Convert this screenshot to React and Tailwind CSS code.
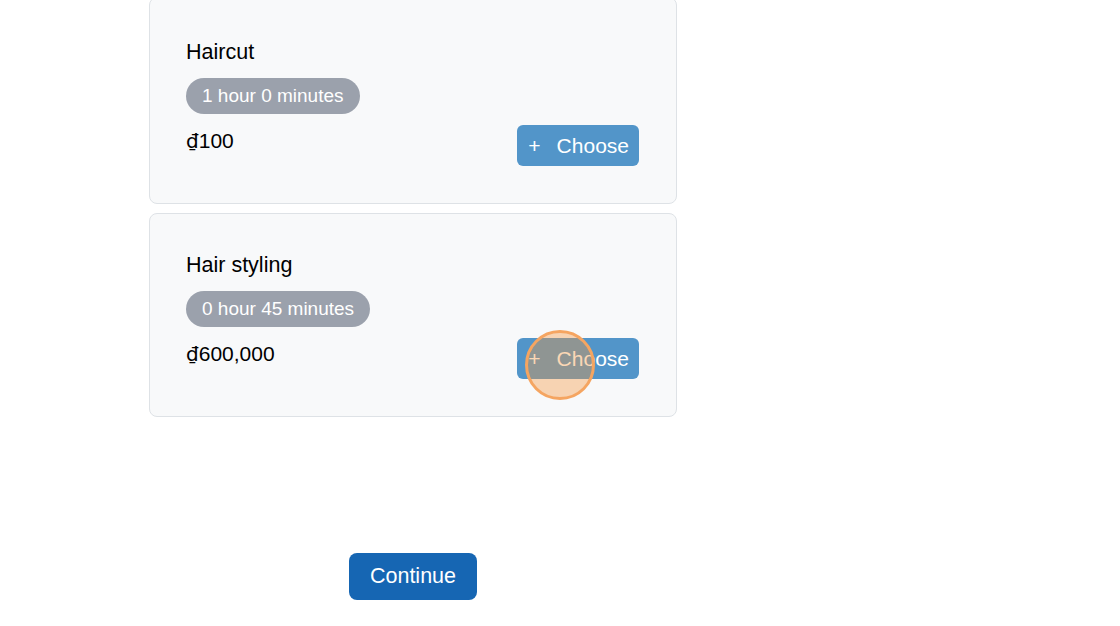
import React from "react";

const services = [
  { name: "Haircut", duration: "1 hour 0 minutes", price: "100" },
  { name: "Hair styling", duration: "0 hour 45 minutes", price: "600,000" },
];

function ServiceCard({ service, first }) {
  return (
    <div
      className={
        "rounded-lg border border-[#dee2e6] bg-[#f8f9fa] pl-9 pr-[37px] pb-[37px] " +
        (first ? "-mt-[3px] pt-[42px]" : "pt-[39px]")
      }
    >
      <h3 className="text-[21.5px] leading-6 text-black">{service.name}</h3>
      <span className="mt-[14px] inline-flex h-9 items-center rounded-full bg-[#9ba1ac] px-4 text-[19px] text-white">
        {service.duration}
      </span>
      <div className="mt-[11px] flex items-start justify-between">
        <p className="mt-1 text-[21px] leading-6 text-black">
          <span style={{ fontFamily: '"DejaVu Sans", sans-serif' }} className="text-[20px]">₫</span>
          {service.price}
        </p>
        <button className="flex h-[41px] items-center gap-4 rounded-md bg-[#5295c9] pl-[11px] pr-[10px] text-[21px] text-white">
          <span>+</span>
          <span>Choose</span>
        </button>
      </div>
    </div>
  );
}

export default function App() {
  return (
    <div
      className="relative h-[626px] w-full overflow-hidden bg-white"
      style={{ fontFamily: '"Liberation Sans", Arial, sans-serif' }}
    >
      <div className="ml-[149px] flex w-[528px] flex-col gap-[9px]">
        {services.map((s, i) => (
          <ServiceCard key={s.name} service={s} first={i === 0} />
        ))}
        <div className="mt-[127px] flex justify-center">
          <button className="h-[47px] rounded-lg bg-[#1666b3] px-[21px] text-[21.5px] text-white">
            Continue
          </button>
        </div>
      </div>

      {/* click indicator */}
      <div className="pointer-events-none absolute left-[525px] top-[330px] h-[70px] w-[70px] rounded-full border-[3px] border-[#f5a561] bg-[rgba(245,150,60,0.38)]" />
    </div>
  );
}
